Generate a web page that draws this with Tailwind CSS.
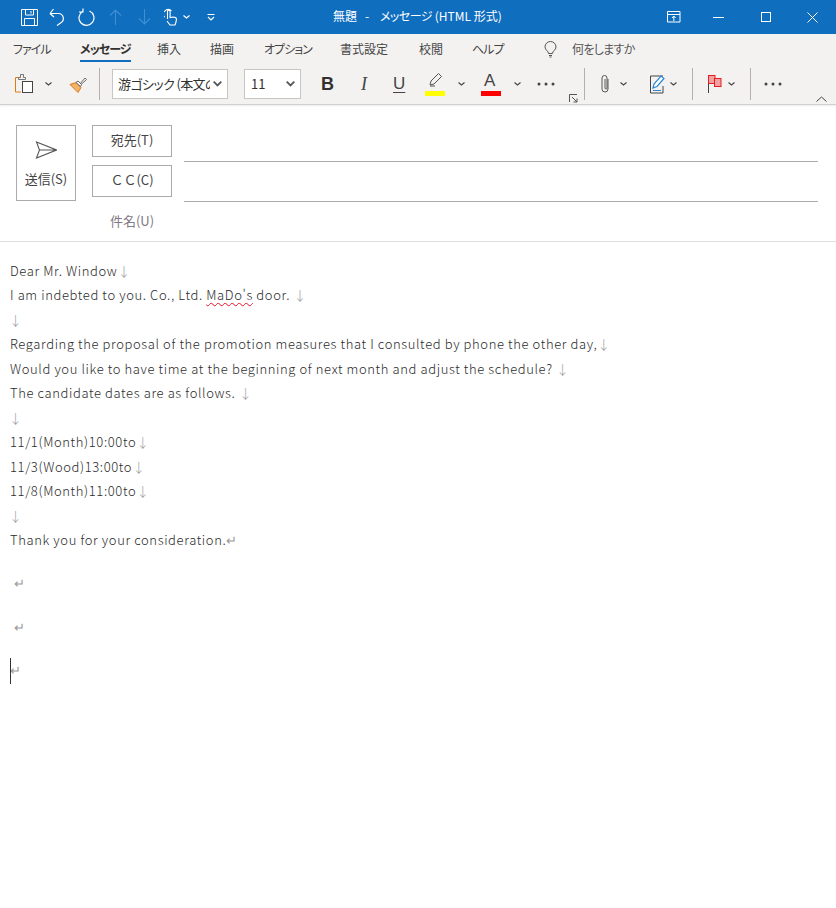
<!DOCTYPE html>
<html lang="ja">
<head>
  <meta charset="UTF-8" />
  <title>無題 - メッセージ (HTML 形式)</title>
  <script src="https://cdn.jsdelivr.net/npm/@tailwindcss/browser@4"></script>
</head>
<body class="bg-white h-[908px] w-[836px] overflow-hidden font-['Noto_Sans_CJK_JP','Noto_Sans',sans-serif] text-[#323130]">
  <!-- Title bar -->
  <header class="h-[34px] bg-[#106ebe] flex items-center relative">
    <div class="flex items-center pl-[21px] gap-[10px]">
      <svg width="17" height="17" viewBox="0 0 17 17" fill="none" stroke="#fff" stroke-width="1"><path d="M.5.500h16v16H.5zM4.500.500v5.500h8V.500M3.500 16.500v-7h10v7M10 2v2.500"/></svg>
      <svg class="ml-[1px]" width="16" height="18" viewBox="0 0 16 18" fill="none" stroke="#fff" stroke-width="1.200"><path d="M1 5.500h8.500a5 5 0 0 1 2 9.500l-3.500 2.500M1 5.500l3.500-4.500M1 5.500l4 3.500"/></svg>
      <svg class="ml-[3px]" width="17" height="18" viewBox="0 0 17 18" fill="none" stroke="#fff" stroke-width="1.200"><path d="M11.500 3a7.500 7.500 0 1 1-7 .500M5 .5v3.500H1"/></svg>
      <svg class="ml-[4px]" width="13" height="16" viewBox="0 0 13 16" fill="none" stroke="#3f8fd6" stroke-width="1.100"><path d="M6.500 16V1M1 6.500l5.500-5.500 5.500 5.500"/></svg>
      <svg class="ml-[6px]" width="13" height="16" viewBox="0 0 13 16" fill="none" stroke="#3f8fd6" stroke-width="1.100"><path d="M6.500 0v15M1 9.500l5.500 5.500 5.500-5.500"/></svg>
      <div class="flex items-center gap-[6px] ml-[3px]">
        <svg width="13" height="18" viewBox="0 0 13 18" fill="none" stroke="#fff" stroke-width="1.100"><path d="M.7 9a3.500 3.500 0 0 1 .3-6 4 4 0 0 1 6.500 0M3.500 11V3.500a1.300 1.300 0 0 1 2.600 0V9.500l3-.500q3 0 3.400 2l-.500 3-1 3H6l-3-4"/></svg>
        <svg width="7" height="4" viewBox="0 0 7 4" fill="none" stroke="#fff" stroke-width="1.200"><path d="M.5.500l3 2.500 3-2.500"/></svg>
      </div>
      <svg class="ml-[7px]" width="8" height="7" viewBox="0 0 8 7" fill="none" stroke="#fff"><path d="M.5.500h7"/><path d="M1 3l3 3 3-3" stroke-width="1.200"/></svg>
    </div>
    <div class="absolute left-[333px] top-[6px] text-[12px] leading-[20px] text-white whitespace-pre [font-feature-settings:'palt']">無題<span class="mx-[8px]">-</span> <span class="tracking-[-0.5px]">メッセージ</span> (HTML 形式)</div>
    <div class="ml-auto flex items-center h-full">
      <svg class="mr-[32px]" width="14" height="12" viewBox="0 0 14 12" fill="none" stroke="#fff"><path d="M.5.500h12.500v10.500H.5zM.5 3.500h12.500M6.800 10V5M5 7l1.800-2 1.800 2"/></svg>
      <svg class="mr-[37px]" width="11" height="1" viewBox="0 0 11 1"><rect width="11" height="1" fill="#fff"/></svg>
      <svg class="mr-[36px]" width="10" height="10" viewBox="0 0 10 10" fill="none" stroke="#fff"><rect x=".5" y=".5" width="9" height="9"/></svg>
      <svg class="mr-[18px]" width="11" height="11" viewBox="0 0 11 11" fill="none" stroke="#fff"><path d="M.5.500l10 10M10.500.500l-10 10"/></svg>
    </div>
  </header>

  <!-- Ribbon -->
  <section class="h-[71px] bg-[#f3f2f1] border-b border-[#d2d0ce] shadow-[0_1px_2px_rgba(0,0,0,0.08)]">
    <nav class="h-[30px] flex items-start pt-[6px] text-[12px] leading-[18px] pl-[13px] text-[#444] [font-feature-settings:'palt']">
      <span class="w-[67px] tracking-[-1px]">ファイル</span>
      <span class="w-[77px] relative font-bold text-[#323130] tracking-[-1px]">メッセージ<i class="absolute left-0 top-[20px] w-[51px] h-[2px] bg-[#106ebe]"></i></span>
      <span class="w-[53px]">挿入</span>
      <span class="w-[54px]">描画</span>
      <span class="w-[76px] tracking-[-1px]">オプション</span>
      <span class="w-[79px]">書式設定</span>
      <span class="w-[53px]">校閲</span>
      <span class="w-[72px] tracking-[-1px]">ヘルプ</span>
      <svg class="mr-[15px] mt-[1px]" width="13" height="17" viewBox="0 0 13 17" fill="none" stroke="#555"><path d="M4.500 12.500c0-2.500-3.500-3.500-3.500-6.500a5.500 5.500 0 0 1 11 0c0 3-3.500 4-3.500 6.500zM5 14.500h3M5.500 16h2"/></svg>
      <span class="text-[#555] tracking-[-0.7px]">何をしますか</span>
    </nav>
    <div class="h-[40px] flex items-center relative">
      <!-- clipboard -->
      <svg class="ml-[15px]" width="19" height="20" viewBox="0 0 19 20" fill="none"><path d="M6 3.500H.5v14.500H6" stroke="#e07b10"/><path d="M3.500 5.500v-2h2v-3h3v3h2v2z" stroke="#777" fill="#f3f2f1"/><rect x="7.500" y="7.500" width="10" height="11" stroke="#444" fill="#fff"/></svg>
      <svg class="ml-[11px]" width="7" height="4" viewBox="0 0 7 4" fill="none" stroke="#444" stroke-width="1.100"><path d="M.5.500l3 2.500 3-2.500"/></svg>
      <svg class="ml-[17px]" width="19" height="17" viewBox="0 0 19 17" fill="none"><path d="M1 8.500l6-2 5 5-3 5z" fill="#f3b36b" stroke="#d97a1a"/><path d="M11 8l5-6 1.500 1.500-5.500 5z" fill="#fff" stroke="#666"/><path d="M7 6.500l2-1.500 3.500 3.500-1 2z" fill="#fff" stroke="#666"/></svg>
      <div class="w-px h-[32px] bg-[#b3b0ad] ml-[11px]"></div>
      <div class="ml-[12px] w-[116px] h-[30px] bg-white border border-[#c8c6c4] flex items-center pl-[5px] pr-[5px] text-[13px] text-[#323130] [font-feature-settings:'palt']">
        <span class="w-[92px] overflow-hidden whitespace-nowrap tracking-[-0.6px]">游ゴシック (本文の</span>
        <svg class="ml-auto" width="9" height="6" viewBox="0 0 9 6" fill="none" stroke="#555" stroke-width="1.800"><path d="M.7.700l3.800 3.800 3.800-3.800"/></svg>
      </div>
      <div class="ml-[16px] w-[57px] h-[30px] bg-white border border-[#c8c6c4] flex items-center pl-[6px] pr-[5px] text-[13px]">
        <span>11</span>
        <svg class="ml-auto" width="9" height="6" viewBox="0 0 9 6" fill="none" stroke="#555" stroke-width="1.800"><path d="M.7.700l3.800 3.800 3.800-3.800"/></svg>
      </div>
      <span class="ml-[20px] w-[40px] font-['Liberation_Sans'] font-bold text-[18px] leading-[20px]">B</span>
      <span class="w-[32px] font-['Liberation_Serif'] italic text-[18px] leading-[20px] text-[#444]">I</span>
      <span class="w-[32px] font-['Liberation_Sans'] underline underline-offset-[3px] decoration-1 text-[17px] leading-[20px] text-[#444]">U</span>
      <div class="relative w-[20px] h-[24px]">
        <svg class="absolute left-[3px] top-0" width="15" height="15" viewBox="0 0 15 15" fill="none" stroke="#555"><path d="M2 13l1-4 7.500-7.500 3 3L6 12zM2 14h5" /></svg>
        <i class="absolute left-0 bottom-0 w-[20px] h-[5px] bg-[#ffff00]"></i>
      </div>
      <svg class="ml-[13px]" width="7" height="4" viewBox="0 0 7 4" fill="none" stroke="#444" stroke-width="1.100"><path d="M.5.500l3 2.500 3-2.500"/></svg>
      <div class="relative w-[20px] h-[24px] ml-[16px] text-center">
        <span class="absolute left-[3px] top-[-1px] font-['Liberation_Sans'] text-[17px] leading-[20px] text-[#444]">A</span>
        <i class="absolute left-0 bottom-0 w-[20px] h-[5px] bg-[#ff0000]"></i>
      </div>
      <svg class="ml-[13px]" width="7" height="4" viewBox="0 0 7 4" fill="none" stroke="#444" stroke-width="1.100"><path d="M.5.500l3 2.500 3-2.500"/></svg>
      <svg class="ml-[16px]" width="18" height="4" viewBox="0 0 18 4" fill="#444"><circle cx="2" cy="2" r="1.500"/><circle cx="9" cy="2" r="1.500"/><circle cx="16" cy="2" r="1.500"/></svg>
      <svg class="absolute left-[569px] bottom-[1px]" width="9" height="9" viewBox="0 0 9 9" fill="none" stroke="#555"><path d="M.5 8V.5H8M3 3l5 5M8 4.500V8H4.500"/></svg>
      <div class="w-px h-[32px] bg-[#b3b0ad] ml-[29px]"></div>
      <svg class="ml-[15px]" width="11" height="20" viewBox="0 0 11 20" fill="none" stroke="#555"><path d="M8 5v10a3 3 0 0 1-6 0V4a2.500 2.500 0 0 1 5 0v10a1 1 0 0 1-2 0V5"/></svg>
      <svg class="ml-[9px]" width="7" height="4" viewBox="0 0 7 4" fill="none" stroke="#444" stroke-width="1.100"><path d="M.5.500l3 2.500 3-2.500"/></svg>
      <svg class="ml-[23px]" width="18" height="19" viewBox="0 0 18 19" fill="none"><path d="M13 1H.5v17h12.500v-7" stroke="#444"/><path d="M3 13l1-4 7-8 3 2.500-7 8z" fill="#fff" stroke="#2b88d8" stroke-width="1.200"/><path d="M3 15.500h8" stroke="#2b88d8"/></svg>
      <svg class="ml-[2px]" width="7" height="4" viewBox="0 0 7 4" fill="none" stroke="#444" stroke-width="1.100"><path d="M.5.500l3 2.500 3-2.500"/></svg>
      <div class="w-px h-[32px] bg-[#b3b0ad] ml-[15px]"></div>
      <svg class="ml-[15px]" width="14" height="18" viewBox="0 0 14 18" fill="none"><path d="M.5 0v18" stroke="#444"/><rect x=".5" y=".5" width="6.500" height="8" fill="#f4a0a0" stroke="#e02020"/><rect x="6.500" y="3.500" width="6.500" height="8" fill="#f4a0a0" stroke="#e02020"/></svg>
      <svg class="ml-[6px]" width="7" height="4" viewBox="0 0 7 4" fill="none" stroke="#444" stroke-width="1.100"><path d="M.5.500l3 2.500 3-2.500"/></svg>
      <div class="w-px h-[32px] bg-[#b3b0ad] ml-[15px]"></div>
      <svg class="ml-[13px]" width="18" height="4" viewBox="0 0 18 4" fill="#444"><circle cx="2" cy="2" r="1.500"/><circle cx="9" cy="2" r="1.500"/><circle cx="16" cy="2" r="1.500"/></svg>
      <svg class="absolute right-[9px] bottom-[2px]" width="11" height="6" viewBox="0 0 11 6" fill="none" stroke="#444"><path d="M.5 5.500l5-4.500 5 4.500"/></svg>
    </div>
  </section>

  <!-- Address fields -->
  <section class="h-[137px] border-b border-[#e1dfdd] flex pl-[16px] pt-[20px] text-[13px]">
    <button class="w-[60px] h-[76px] border border-[#ababab] flex flex-col items-center text-[#444]">
      <svg class="mt-[15px]" width="22" height="18" viewBox="0 0 22 18" fill="none" stroke="#555" stroke-width="1.100"><path d="M1.500 1l20 8-20 8 3-8zM4.500 9h17"/></svg>
      <span class="mt-[12px] leading-[16px]">送信(S)</span>
    </button>
    <div class="ml-[16px] w-[80px]">
      <div class="h-[32px] pb-[2px] border border-[#ababab] flex items-center justify-center text-[#444]">宛先(T)</div>
      <div class="h-[32px] pb-[2px] mt-[8px] border border-[#ababab] flex items-center justify-center text-[#444]">ＣＣ(C)</div>
      <div class="mt-[15px] text-center leading-[18px] text-[#7f7a85]">件名(U)</div>
    </div>
    <div class="ml-[12px] w-[634px]">
      <div class="h-[37px] border-b border-[#ababab]"></div>
      <div class="h-[40px] border-b border-[#ababab]"></div>
    </div>
  </section>

  <!-- Message body -->
  <main class="pl-[10px] pt-[17px] text-[13px] font-light leading-[24.450px] tracking-[0.61px] text-[#2b2b2b] whitespace-nowrap">
    <div>Dear Mr. Window<span class="text-[#999]">↓</span></div>
    <div>I am indebted to you. Co., Ltd. <span class="underline decoration-wavy decoration-[#e81123] decoration-1 underline-offset-2">MaDo's</span> door. <span class="text-[#999]">↓</span></div>
    <div class="-ml-[1px] text-[#999]">↓</div>
    <div>Regarding the proposal of the promotion measures that I consulted by phone the other day,<span class="text-[#999]">↓</span></div>
    <div>Would you like to have time at the beginning of next month and adjust the schedule? <span class="text-[#999]">↓</span></div>
    <div>The candidate dates are as follows. <span class="text-[#999]">↓</span></div>
    <div class="-ml-[1px] text-[#999]">↓</div>
    <div>11/1(Month)10:00to<span class="text-[#999]">↓</span></div>
    <div>11/3(Wood)13:00to<span class="text-[#999]">↓</span></div>
    <div>11/8(Month)11:00to<span class="text-[#999]">↓</span></div>
    <div class="-ml-[1px] text-[#999]">↓</div>
    <div>Thank you for your consideration.<span class="text-[#999]">↵</span></div>
    <div class="mt-[19px] pl-[4px] text-[#999]">↵</div>
    <div class="mt-[19px] pl-[4px] text-[#999]">↵</div>
    <div class="mt-[19px] relative text-[#999]"><i class="absolute left-0 top-[0px] w-px h-[26px] bg-[#333]"></i>↵</div>
  </main>
</body>
</html>
